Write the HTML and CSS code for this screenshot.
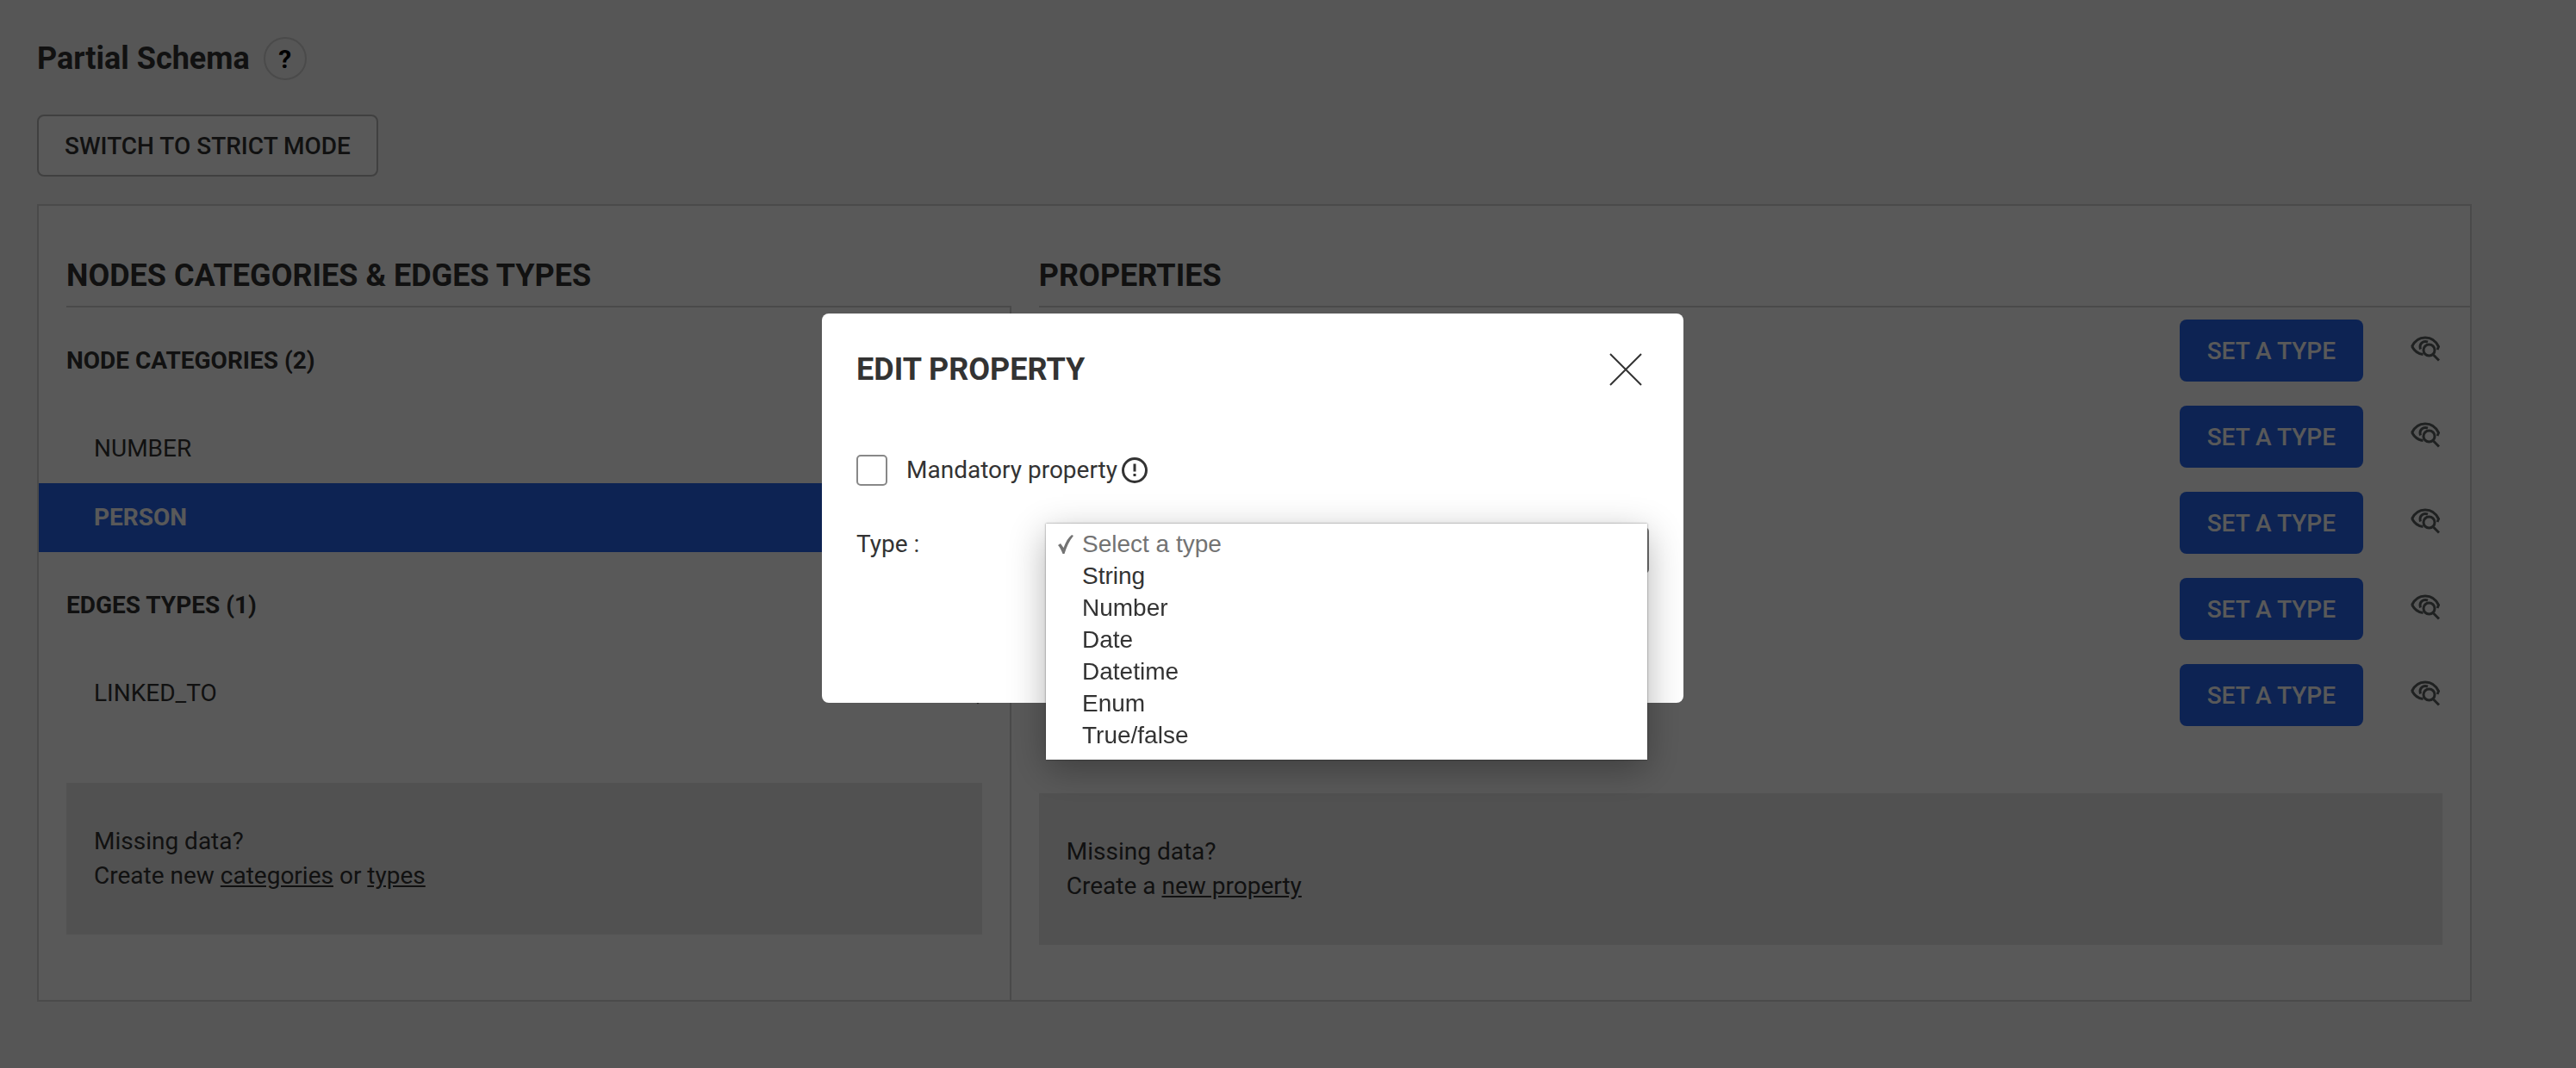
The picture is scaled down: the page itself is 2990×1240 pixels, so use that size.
FILE: index.html
```
<!DOCTYPE html>
<html lang="en">

	<head>
		<meta charset="utf-8">
		<title>Schema</title>
		<link rel="stylesheet" href="styles.css">
	</head>

	<body>
		<svg class="sprite" aria-hidden="true">
			<symbol id="eye" viewBox="0 0 34 30">
				<path d="M1.5 12.5C8 -1.5 26 -1.5 32.5 12.5L31 16" />
				<path d="M1.5 12C5 18.5 9 21 14.5 21.5" />
				<path d="M11.5 15.5C9.5 9 14.5 5 20 7" />
				<circle cx="21.5" cy="16.5" r="6.5" />
				<path d="M26.5 22L33 28.5" />
			</symbol>
		</svg>

		<main class="page">
			<div class="title">
				<h1>Partial Schema</h1>
				<button class="help" type="button">?</button>
			</div>
			<button class="btn switch" type="button">SWITCH TO STRICT MODE</button>

			<div class="panel">
				<section class="types">
					<h2>NODES CATEGORIES &amp; EDGES TYPES</h2>
					<div class="content">
						<h3>NODE CATEGORIES (2)</h3>
						<ul>
							<li>NUMBER <svg class="eye"><use href="#eye" /></svg></li>
							<li class="active">PERSON</li>
						</ul>
						<h3>EDGES TYPES (1)</h3>
						<ul>
							<li>LINKED_TO <svg class="eye"><use href="#eye" /></svg></li>
						</ul>
						<div class="missing">
							Missing data?<br>
							Create new <a href="#">categories</a> or <a href="#">types</a>
						</div>
					</div>
				</section>

				<section class="properties">
					<h2>PROPERTIES</h2>
					<div class="content">
						<div class="row">
							<button class="btn primary" type="button">SET A TYPE</button>
							<svg class="eye"><use href="#eye" /></svg>
						</div>
						<div class="row">
							<button class="btn primary" type="button">SET A TYPE</button>
							<svg class="eye"><use href="#eye" /></svg>
						</div>
						<div class="row">
							<button class="btn primary" type="button">SET A TYPE</button>
							<svg class="eye"><use href="#eye" /></svg>
						</div>
						<div class="row">
							<button class="btn primary" type="button">SET A TYPE</button>
							<svg class="eye"><use href="#eye" /></svg>
						</div>
						<div class="row">
							<button class="btn primary" type="button">SET A TYPE</button>
							<svg class="eye"><use href="#eye" /></svg>
						</div>
						<div class="missing">
							Missing data?<br>
							Create a <a href="#">new property</a>
						</div>
					</div>
				</section>
			</div>
		</main>

		<div class="overlay">
			<div class="modal" role="dialog" aria-labelledby="modalTitle">
				<div class="modal-head">
					<h2 id="modalTitle">EDIT PROPERTY</h2>
					<button class="close" type="button" aria-label="Close">
						<svg viewBox="0 0 38 38"><path d="M1 1L37 37M37 1L1 37" /></svg>
					</button>
				</div>
				<div class="check">
					<input id="mandatory" type="checkbox">
					<label for="mandatory">Mandatory property</label>
					<svg class="info" viewBox="0 0 30 30">
						<circle cx="15" cy="15" r="13.5" />
						<path d="M15 7.5V16.500M15 19V22" />
					</svg>
				</div>
				<div class="field">
					<label for="type">Type :</label>
					<div class="dropdown">
						<select id="type">
							<option>Select a type</option>
							<option>String</option>
							<option>Number</option>
							<option>Date</option>
							<option>Datetime</option>
							<option>Enum</option>
							<option>True/false</option>
						</select>
						<ul class="menu">
							<li class="selected">
								<svg class="tick" viewBox="0 0 20 22"><path d="M1 12L4 10L7.5 15C10 8 13 3 17 0L19 1C14 7 11 14 8.500 22H6.500C5 18 3 14 1 12Z" /></svg>
								Select a type
							</li>
							<li>String</li>
							<li>Number</li>
							<li>Date</li>
							<li>Datetime</li>
							<li>Enum</li>
							<li>True/false</li>
						</ul>
					</div>
				</div>
			</div>
		</div>
	</body>
</html>
```
FILE: styles.css
```
* {
	box-sizing: border-box;
}
body {
	margin: 0;
	background: #f5f5f5;
	color: #333;
	font-family: Roboto, "Liberation Sans", sans-serif;
	font-size: 28px;
	line-height: 40px;
}
h1, h2, h3, ul {
	margin: 0;
	padding: 0;
}
h1, h2 {
	font-size: 36px;
	line-height: 50px;
	font-weight: 700;
}
ul {
	list-style: none;
}
a {
	color: inherit;
}
button {
	font-family: inherit;
	color: inherit;
}
.sprite {
	display: none;
}
.page {
	padding: 43px 121px 64px 43px;
}
.title {
	display: flex;
	align-items: center;
	gap: 16px;
	margin-bottom: 40px;
}
.help {
	width: 50px;
	height: 50px;
	padding: 0;
	border: 2px solid #d3d3d3;
	border-radius: 50%;
	background: #f5f5f5;
	color: #000;
	font-size: 30px;
	font-weight: 700;
}
.btn {
	display: block;
	height: 72px;
	padding: 0 32px;
	border: none;
	border-radius: 8px;
	font-size: 28px;
	font-weight: 500;
}
.switch {
	padding: 0 30px;
	border: 2px solid #b7b7b7;
	background: #fff;
}
.primary {
	background: #2564ed;
	color: #fff;
}

/* schema panel */
.panel {
	display: grid;
	grid-template-columns: 2fr 3fr;
	margin-top: 32px;
	border: 2px solid #d3d3d3;
	background: #fff;
}
.types,
.properties {
	display: flex;
	flex-direction: column;
}
.panel h2 {
	margin-left: 32px;
	padding: 56px 0 10px;
	border-bottom: 2px solid #d3d3d3;
}
.content {
	flex: 1;
	padding-bottom: 64px;
}
.types .content {
	border-right: 2px solid #d3d3d3;
}
.types h3 {
	padding: 42px 32px;
	font-size: 28px;
	font-weight: 700;
}
.types li {
	display: flex;
	align-items: center;
	justify-content: space-between;
	height: 80px;
	padding: 0 35px 0 64px;
}
.types .active {
	background: #2564ed;
	color: #fff;
	font-weight: 700;
}
.missing {
	margin: 64px 32px 0;
	padding: 48px 32px;
	background: #e7e7e7;
}
.row {
	display: flex;
	align-items: center;
	justify-content: flex-end;
	gap: 55px;
	height: 100px;
	padding-right: 35px;
}
.eye {
	width: 34px;
	height: 30px;
	margin-bottom: 4px;
	fill: none;
	stroke: #5b5f5f;
	stroke-width: 3;
}

/* edit property modal */
.overlay {
	position: fixed;
	inset: 0;
	background: rgba(0, 0, 0, 0.65);
}
.modal {
	position: absolute;
	top: 364px;
	left: calc(50% - 541px);
	width: 1000px;
	padding: 40px 40px 150px;
	border-radius: 8px;
	background: #fff;
}
.modal-head {
	display: flex;
	align-items: center;
	justify-content: space-between;
	padding-right: 8px;
}
.close {
	padding: 0;
	border: none;
	background: none;
}
.close svg {
	display: block;
	width: 38px;
	height: 38px;
	fill: none;
	stroke: #333;
	stroke-width: 2;
}
.check {
	display: flex;
	align-items: center;
	margin-top: 72px;
}
.check input {
	appearance: none;
	width: 36px;
	height: 36px;
	margin: 0 22px 0 0;
	border: 2px solid #888;
	border-radius: 5px;
	background: #fff;
}
.info {
	width: 30px;
	height: 30px;
	margin-left: 5px;
	fill: none;
	stroke: #333;
	stroke-width: 3;
}
.field {
	display: flex;
	justify-content: space-between;
	margin-top: 46px;
}
.dropdown {
	position: relative;
	width: 700px;
}
.dropdown select {
	display: block;
	width: 100%;
	height: 54px;
	border: 2px solid #777;
	border-radius: 5px;
	background: #fff;
	font-size: 28px;
}
.menu {
	position: absolute;
	top: -4px;
	left: 0;
	right: 2px;
	padding: 5px 0 10px;
	background: #fff;
	box-shadow: 0 0 2px rgba(0, 0, 0, 0.5), 0 12px 40px rgba(0, 0, 0, 0.3);
	font-family: "Liberation Sans", Arial, sans-serif;
	line-height: 37px;
}
.menu li {
	position: relative;
	padding-left: 42px;
}
.menu .selected {
	color: #737373;
}
.tick {
	position: absolute;
	top: 8px;
	left: 13px;
	width: 20px;
	height: 22px;
	fill: #737373;
}
```
